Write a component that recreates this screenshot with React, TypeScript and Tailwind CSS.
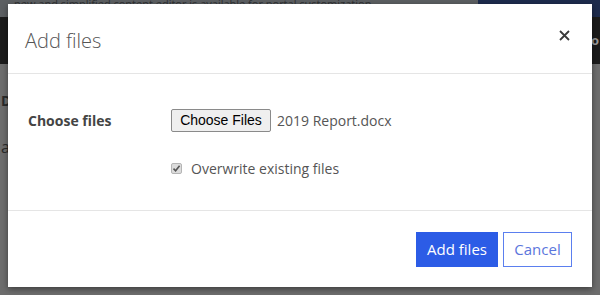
import React from 'react'

export default function App() {
    return (
        <div className="relative w-[600px] h-[295px] overflow-hidden bg-[#6b6b6b] font-['Open_Sans','Noto_Sans',sans-serif]">
            {/* Dimmed page behind the modal */}
            <div className="flex flex-col h-full">
                <div className="flex h-[17px] shrink-0">
                    <div className="flex-1 bg-[#5c5f62] text-[11px] leading-[8px] text-[#2f3133] pl-[14px] whitespace-nowrap overflow-hidden">
                        new and simplified content editor is available for portal customization.
                    </div>
                    <div className="w-[122px] bg-[#1d2b4d]" />
                </div>
                <div className="h-[47px] shrink-0 bg-[#1b1b1b] flex items-center justify-end pr-[1px]">
                    <span className="text-[13px] text-[#9a9a9a] font-bold">o</span>
                </div>
                <div className="flex-1 bg-[#6d6d6d] pt-[26px] pl-[1px] text-[#2a2a2a] text-[14px] font-bold">
                    <div>D</div>
                    <div className="mt-[24px] font-normal text-[16px]">a</div>
                </div>
            </div>

            {/* Modal */}
            <div className="absolute left-[8px] top-[4px] w-[584px] h-[283px] bg-white shadow-[0_2px_6px_rgba(0,0,0,0.45)] flex flex-col">
                <div className="h-[70px] shrink-0 flex items-center justify-between pl-[17px] pr-[22px] border-b border-[#e5e5e5]">
                    <h2 className="text-[20px] font-light text-[#555] pt-[4px]">Add files</h2>
                    <button className="pb-[6px]">
                        <svg width="11" height="11" viewBox="0 0 11 11">
                            <path d="M1 1L10 10M10 1L1 10" stroke="#3a3a3a" strokeWidth="1.8" />
                        </svg>
                    </button>
                </div>

                <div className="h-[137px] shrink-0 border-b border-[#e5e5e5] pt-[35px] pl-[20px]">
                    <div className="flex items-center">
                        <div className="w-[143px] text-[14px] font-bold text-[#444]">Choose files</div>
                        <button className="h-[23px] w-[100px] bg-[#efefef] border border-[#8a8a8a] rounded-[2px] text-[14px] text-black font-['Liberation_Sans',Arial,sans-serif]">
                            Choose Files
                        </button>
                        <span className="ml-[6px] text-[14px] text-[#555]">2019 Report.docx</span>
                    </div>
                    <div className="flex items-center mt-[26px] ml-[143px]">
                        <span className="w-[11px] h-[11px] rounded-[2px] bg-[#dcdcdc] border border-[#b5b5b5] flex items-center justify-center">
                            <svg width="9" height="9" viewBox="0 0 9 9">
                                <path d="M1.5 4.6L3.6 6.7L7.6 1.8" fill="none" stroke="#555" strokeWidth="1.6" />
                            </svg>
                        </span>
                        <span className="ml-[9px] text-[14px] text-[#555]">Overwrite existing files</span>
                    </div>
                </div>

                <div className="flex-1 flex items-start justify-end pt-[21px] pr-[20px] gap-[5px]">
                    <button className="h-[35px] w-[82px] bg-[#2c5ce6] text-white text-[15px]">Add files</button>
                    <button className="h-[35px] w-[69px] bg-white border border-[#5b7fef] text-[#5b76dc] text-[15px]">Cancel</button>
                </div>
            </div>
        </div>
    )
}
